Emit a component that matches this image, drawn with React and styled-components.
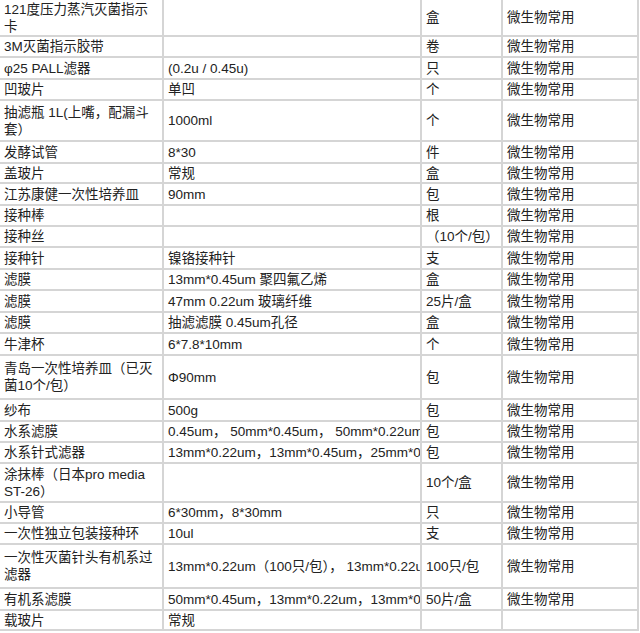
import React from 'react';
import styled, { createGlobalStyle } from 'styled-components';

const GlobalStyle = createGlobalStyle`
    html, body {
        margin: 0;
        padding: 0;
        background: #fff;
    }
    body {
        font-family: "Liberation Sans", Arial, "Noto Sans CJK SC", sans-serif;
        color: #222;
    }
`;

const LINE = '#d5d5d5';

// [row height, name, spec, unit, use]
const rows = [
    [37, '121度压力蒸汽灭菌指示卡', '', '盒', '微生物常用'],
    [21, '3M灭菌指示胶带', '', '卷', '微生物常用'],
    [22, 'φ25 PALL滤器', '(0.2u / 0.45u)', '只', '微生物常用'],
    [21, '凹玻片', '单凹', '个', '微生物常用'],
    [41, '抽滤瓶 1L(上嘴，配漏斗套）', '1000ml', '个', '微生物常用'],
    [22, '发酵试管', '8*30', '件', '微生物常用'],
    [20, '盖玻片', '常规', '盒', '微生物常用'],
    [22, '江苏康健一次性培养皿', '90mm', '包', '微生物常用'],
    [21, '接种棒', '', '根', '微生物常用'],
    [21, '接种丝', '', '（10个/包）', '微生物常用'],
    [22, '接种针', '镍铬接种针', '支', '微生物常用'],
    [21, '滤膜', '13mm*0.45um 聚四氟乙烯', '盒', '微生物常用'],
    [22, '滤膜', '47mm 0.22um 玻璃纤维', '25片/盒', '微生物常用'],
    [21, '滤膜', '抽滤滤膜 0.45um孔径', '盒', '微生物常用'],
    [22, '牛津杯', '6*7.8*10mm', '个', '微生物常用'],
    [44, '青岛一次性培养皿（已灭菌10个/包）', 'Φ90mm', '包', '微生物常用'],
    [22, '纱布', '500g', '包', '微生物常用'],
    [21, '水系滤膜', '0.45um， 50mm*0.45um， 50mm*0.22um', '包', '微生物常用'],
    [21, '水系针式滤器', '13mm*0.22um，13mm*0.45um，25mm*0.22um', '包', '微生物常用'],
    [39, '涂抹棒（日本pro media ST-26）', '', '10个/盒', '微生物常用'],
    [21, '小导管', '6*30mm，8*30mm', '只', '微生物常用'],
    [21, '一次性独立包装接种环', '10ul', '支', '微生物常用'],
    [44, '一次性灭菌针头有机系过滤器', '13mm*0.22um（100只/包）， 13mm*0.22um（100只/包）', '100只/包', '微生物常用'],
    [22, '有机系滤膜', '50mm*0.45um，13mm*0.22um，13mm*0.45um', '50片/盒', '微生物常用'],
    [20, '载玻片', '常规', '', ''],
];

function App() {
    return (
        <>
            <GlobalStyle />
            <Table>
                {rows.map(([h, name, spec, unit, use], i) => (
                    <Row key={i} $h={h}>
                        <Cell>{name}</Cell>
                        <Cell $nowrap>{spec}</Cell>
                        <Cell $nowrap>{unit}</Cell>
                        <Cell $nowrap>{use}</Cell>
                    </Row>
                ))}
            </Table>
        </>
    );
}

export default App;

const Table = styled.div`
    width: 639px;
    display: flex;
    flex-direction: column;
`;

const Row = styled.div`
    display: grid;
    grid-template-columns: 164px 258px 81px 136px;
    height: ${p => p.$h}px;
    border-bottom: 2px solid ${LINE};
    box-sizing: border-box;
`;

const Cell = styled.div`
    display: flex;
    align-items: center;
    box-sizing: border-box;
    border-right: 2px solid ${LINE};
    padding: 0 5px 0 4px;
    font-size: 13.5px;
    line-height: 17px;
    overflow: hidden;
    white-space: ${p => (p.$nowrap ? 'nowrap' : 'normal')};
`;
